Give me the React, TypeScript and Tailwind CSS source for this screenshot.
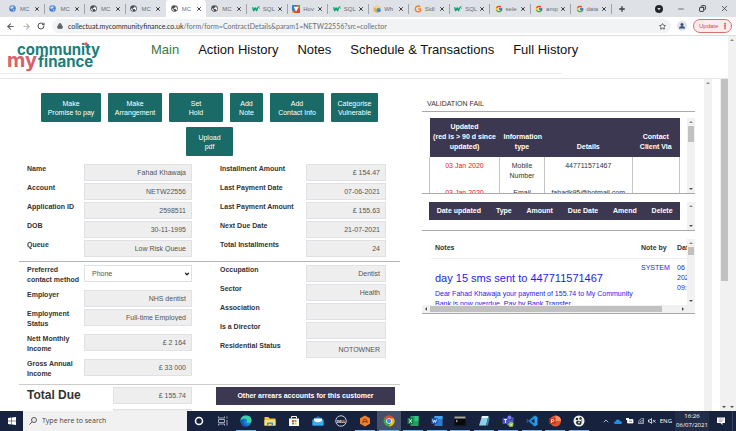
import React from "react";
import { FcGoogle } from "react-icons/fc";
import {
  ArrowLeft,
  ArrowRight,
  ChevronDown,
  ChevronUp,
  Copy,
  Lock,
  Minus,
  MoreVertical,
  Plus,
  RotateCw,
  Star,
  X,
} from "lucide-react";

/* ---------- browser tabs ---------- */

const BlueGlobe = () => (
  <svg viewBox="0 0 12 12" className="size-[7px]">
    <circle cx="6" cy="6" r="5.6" fill="#4a7fd0" />
    <path d="M2 4Q5 1 9 3L6 6 3 7ZM6 8l4-1-2 3Z" fill="#cfe0f7" />
  </svg>
);

const Globe = () => (
  <svg viewBox="0 0 12 12" className="size-[7px]">
    <circle cx="6" cy="6" r="5.7" fill="#4b4f54" />
    <path d="M1.5 5.5 4 7l1 3.5Q1.6 9.500 1.500 5.500ZM6 1.500l2 1-1 2-2.500.5L5 6.500l3 .5 1 2.500q2-2 1.500-4.500L9 4l.500-1.200Z" fill="#fff" />
  </svg>
);

const W3 = () => (
  <svg viewBox="0 0 14 10" className="h-[6px] w-[8px]">
    <path d="M1 2l2 6 2.500-5L8 8l2-6" fill="none" stroke="#0aa06e" strokeWidth="2.400" strokeLinejoin="round" />
    <path d="M10.500 1h2.500l-1.500 1.500q1.500 0 1.500 2" fill="none" stroke="#0aa06e" strokeWidth="1.200" />
  </svg>
);

const Mosaic = () => (
  <svg viewBox="0 0 14 14" className="size-[8px]">
    <path d="M0 0h14v14H0Z" fill="#d9482b" />
    <path d="M0 0h6l1 7-7 7Z" fill="#2f7de0" />
    <path d="M8 0h6v8Z" fill="#58a83c" />
    <path d="M3 3h9L7 12Z" fill="#fff" />
    <path d="M0 9l5 5H0Z" fill="#f0b429" />
  </svg>
);

const Box = () => (
  <svg viewBox="0 0 14 14" className="size-[8px]">
    <path d="M1 4l6-3 6 3v7l-6 3-6-3Z" fill="#e9b44c" />
    <path d="M1 4l6 2.500L13 4 7 1Z" fill="#f7d588" />
    <circle cx="10" cy="9" r="3.600" fill="#3f8fd8" />
  </svg>
);

const OrangeG = () => (
  <svg viewBox="0 0 14 14" className="size-[8px]">
    <path d="M11 3Q7 .5 3.500 3.500 1 7 3.500 10.500 8 13.500 11.500 10V7H7.500" fill="none" stroke="#f58220" strokeWidth="2.400" strokeLinejoin="round" />
  </svg>
);

const GoogleG = () => <FcGoogle className="size-[8px]" />;

const tabs: { icon: React.FC; text: string; active?: boolean }[] = [
  { icon: BlueGlobe, text: "MC" },
  { icon: BlueGlobe, text: "MC" },
  { icon: Globe, text: "MC" },
  { icon: Globe, text: "MC" },
  { icon: Globe, text: "MC", active: true },
  { icon: Globe, text: "MC" },
  { icon: W3, text: "SQL" },
  { icon: Mosaic, text: "Hov" },
  { icon: W3, text: "SQL" },
  { icon: Box, text: "Wh" },
  { icon: OrangeG, text: "Sidl" },
  { icon: W3, text: "SQL" },
  { icon: GoogleG, text: "sele" },
  { icon: GoogleG, text: "amp" },
  { icon: GoogleG, text: "data" },
];

function TabStrip() {
  return (
    <div className="flex h-[17px] shrink-0 items-center bg-[#dee1e6] pl-1">
      <div className="grid h-full w-[607px] shrink-0 grid-cols-15">
        {tabs.map((t, i) => (
          <div
            key={i}
            className={
              t.active
                ? "flex min-w-0 items-center rounded-t-[3px] bg-white pr-1 pl-[5px]"
                : "flex min-w-0 items-center pr-1 pl-[5px]"
            }
          >
            <span className="flex w-[11px] shrink-0">
              <t.icon />
            </span>
            <span className="w-[13px] shrink-0 text-[6px] whitespace-nowrap text-[#6b6f74]">{t.text}</span>
            <button aria-label="Close tab" className="ml-px shrink-0">
              <X className="size-[6px] text-[#3c4043]" strokeWidth={4} />
            </button>
            {!t.active && i !== 3 && <span className="ml-auto h-[10px] w-px shrink-0 translate-x-1 bg-[#a0a3a8]" />}
          </div>
        ))}
      </div>
      <button aria-label="New tab" className="ml-[7px]">
        <Plus className="size-[8px] text-[#3c4043]" strokeWidth={4} />
      </button>
      <div className="ml-auto flex items-center gap-[14px] pr-[7px]">
        <svg viewBox="0 0 12 12" className="size-[8px]">
          <circle cx="6" cy="6" r="6" fill="#24272b" />
          <path d="M3.500 4.500h5L6 8Z" fill="#dee1e6" />
        </svg>
        <Minus className="size-[8px] text-[#333]" />
        <Copy className="size-[7px] -scale-x-100 text-[#222]" strokeWidth={3} />
        <X className="size-[9px] text-[#333]" strokeWidth={2} />
      </div>
    </div>
  );
}

function Toolbar() {
  return (
    <div className="flex h-[19px] shrink-0 items-center border-b border-[#dcdde0] bg-white pr-1 pl-[6px]">
      <button aria-label="Back" className="w-4">
        <ArrowLeft className="size-[9px] text-[#5f6368]" strokeWidth={3} />
      </button>
      <button aria-label="Forward" className="w-[15px]">
        <ArrowRight className="size-[9px] text-[#b5b8bc]" strokeWidth={3} />
      </button>
      <button aria-label="Reload" className="w-[15px]">
        <RotateCw className="size-[8px] text-[#4d5156]" strokeWidth={3} />
      </button>
      <div className="flex h-[14px] min-w-0 flex-1 items-center rounded-full bg-[#f1f3f4] px-[5px]">
        <Lock className="mr-[5px] size-[6px] shrink-0 fill-[#5f6368] text-[#5f6368]" strokeWidth={3} />
        <p className="min-w-0 flex-1 overflow-hidden font-['Lato','Noto_Sans',sans-serif] text-[7px] whitespace-nowrap text-[#6b6f74]">
          <span className="text-[#2b2d30]">collectuat.mycommunityfinance.co.uk</span>
          /form/form=ContractDetails&amp;param1=NETW22556?src=collector
        </p>
        <Star className="size-[7px] shrink-0 text-[#4d5156]" strokeWidth={3} />
      </div>
      <svg viewBox="0 0 20 20" className="mx-[6px] size-[10px]">
        <circle cx="10" cy="10" r="10" fill="#dfe3ec" />
        <circle cx="10" cy="7" r="3" fill="#3f5170" />
        <path d="M4 15v-2q2-3 6-3t6 3v2Z" fill="#3f5170" />
      </svg>
      <button className="flex h-[14px] w-[39px] items-center justify-between rounded-full border border-[#d9706a] bg-[#fdeceb] pr-[2px] pl-[5px] text-[6px] text-[#c9514b]">
        Update
        <MoreVertical className="size-[8px]" strokeWidth={4} />
      </button>
    </div>
  );
}

/* ---------- scroll bars ---------- */

const Up = () => (
  <svg viewBox="0 0 8 8" className="size-[8px] shrink-0">
    <path d="M2 5h4L4 3Z" fill="#8b8b8b" />
  </svg>
);
const Down = () => (
  <svg viewBox="0 0 8 8" className="size-[8px] shrink-0">
    <path d="M2 3h4L4 5Z" fill="#505050" />
  </svg>
);

function VBar({ thumb, noUp, noDown }: { thumb?: string; noUp?: boolean; noDown?: boolean }) {
  return (
    <div className="flex w-2 shrink-0 flex-col items-center bg-[#f1f1f1]">
      {!noUp && <Up />}
      {thumb && <div className={`shrink-0 bg-[#c1c1c1] ${thumb}`} />}
      <div className="flex-1" />
      {!noDown && <Down />}
    </div>
  );
}

/* ---------- page header ---------- */

function Logo() {
  return (
    <svg viewBox="0 0 98 34" className="h-[34px] w-[98px] shrink-0" role="img" aria-label="community my finance">
      <g fontFamily="Inter, Lato, sans-serif" fontWeight="700">
        <text x="10" y="15" fontSize="15" fill="#1a7f7c">community</text>
        <text x="0" y="27" fontSize="20" fill="#d9606b">my</text>
        <text x="31" y="27" fontSize="15" fill="#1a7f7c">finance</text>
      </g>
      <circle cx="79" cy="4" r="1.800" fill="#e0555f" />
    </svg>
  );
}

function Header() {
  return (
    <header className="mb-1 flex h-[38px] shrink-0 items-start">
      <div className="flex h-full w-[562px] items-start border-b border-[#ececec] pt-1 pl-[7px]">
        <Logo />
        <nav className="ml-[46px] flex gap-[19px] pt-[1px] text-[13px] leading-[18px] whitespace-nowrap text-[#111]">
          <a href="#main" className="text-[#3c763d]">Main</a>
          <a href="#actions">Action History</a>
          <a href="#notes">Notes</a>
          <a href="#schedule">Schedule &amp; Transactions</a>
          <a href="#history">Full History</a>
        </nav>
      </div>
    </header>
  );
}

/* ---------- contract details ---------- */

const actions = [
  ["Make", "Promise to pay", "w-[60px]"],
  ["Make", "Arrangement", "w-[54px]"],
  ["Set", "Hold", "w-[54px]"],
  ["Add", "Note", "w-[33px]"],
  ["Add", "Contact Info", "w-[54px]"],
  ["Categorise", "Vulnerable", "w-[47px]"],
  ["Upload", "pdf", "w-[47px]"],
];

const box = "mb-[2px] h-[17px] border border-[#dfe1e5] bg-[#eee] px-[5px] text-right text-[7px] text-[#555]";

function Field({ label, value, wide }: { label: string; value: string; wide?: boolean }) {
  const id = label.toLowerCase().replace(/ /g, "-");
  return (
    <div className="flex items-start">
      <label htmlFor={id} className={wide ? "w-[57px] pb-[5px] font-bold" : "w-[86px] font-bold whitespace-nowrap"}>
        {label}
      </label>
      <input id={id} readOnly value={value} className={wide ? `${box} w-[108px]` : `${box} w-[80px]`} />
    </div>
  );
}

function Details() {
  return (
    <section className="w-[381px] shrink-0 pt-[14px]">
      <div className="flex flex-wrap justify-center gap-x-[7px] gap-y-[5px] px-5">
        {actions.map(([a, b, w]) => (
          <button key={b} className={`h-[29px] rounded-[1px] bg-[#1a6b67] leading-[9px] text-white ${w}`}>
            {a}
            <br />
            {b}
          </button>
        ))}
      </div>

      <div className="mt-2 flex gap-7 border-b border-[#b5b5b5] pb-[2px] pl-2">
        <div>
          <Field wide label="Name" value="Fahad Khawaja" />
          <Field wide label="Account" value="NETW22556" />
          <Field wide label="Application ID" value="2598511" />
          <Field wide label="DOB" value="30-11-1995" />
          <Field wide label="Queue" value="Low Risk Queue" />
        </div>
        <div>
          <Field label="Installment Amount" value="£ 154.47" />
          <Field label="Last Payment Date" value="07-06-2021" />
          <Field label="Last Payment Amount" value="£ 155.63" />
          <Field label="Next Due Date" value="21-07-2021" />
          <Field label="Total Installments" value="24" />
        </div>
      </div>

      <div className="flex gap-7 border-b border-[#ccc] pt-[3px] pl-2">
        <div>
          <div className="flex items-start">
            <label htmlFor="contact" className="w-[57px] pb-[5px] font-bold">
              Preferred contact method
            </label>
            <div className="relative">
              <select
                id="contact"
                className="h-[17px] w-[108px] appearance-none border border-[#dfe1e5] bg-white px-[7px] text-[7px] text-[#555]"
              >
                <option>Phone</option>
              </select>
              <ChevronDown className="pointer-events-none absolute top-[6px] right-[2px] size-[6px] text-[#222]" strokeWidth={5} />
            </div>
          </div>
          <Field wide label="Employer" value="NHS dentist" />
          <Field wide label="Employment Status" value="Full-time Employed" />
          <Field wide label="Nett Monthly Income" value="£ 2 164" />
          <Field wide label="Gross Annual Income" value="£ 33 000" />
        </div>
        <div>
          <Field label="Occupation" value="Dentist" />
          <Field label="Sector" value="Health" />
          <Field label="Association" value="" />
          <Field label="Is a Director" value="" />
          <Field label="Residential Status" value="NOTOWNER" />
        </div>
      </div>

      <div className="flex items-start gap-6 pt-[2px] pr-[5px] pl-2">
        <div>
          <div className="flex items-start">
            <label htmlFor="total" className="w-[86px] text-[12px] leading-[17px] font-bold whitespace-nowrap">
              Total Due
            </label>
            <input id="total" readOnly value="£ 155.74" className={`${box} w-[79px]`} />
          </div>
          <input aria-label="Outstanding" readOnly value="" className={`${box} mt-[3px] ml-[86px] w-[79px]`} />
        </div>
        <button className="h-[18px] flex-1 bg-[#3d3851] font-bold text-white">Other arrears accounts for this customer</button>
      </div>
    </section>
  );
}

/* ---------- right-hand lists ---------- */

const cell = "border-x border-[#c4c4c4] px-1 pt-1 pb-[3px]";

function Lists() {
  return (
    <section className="min-w-0 flex-1 pt-[20px]">
      <h2 className="border-b border-[#aaa] pb-[2px] pl-[5px]">VALIDATION FAIL</h2>

      <div className="flex h-[82px] overflow-hidden border-b border-[#aaa] pt-[6px]">
        <div className="min-w-0 flex-1 pr-[7px] pl-[7px]">
          <table className="w-full table-fixed border-collapse text-center align-top">
            <colgroup>
              <col className="w-[28%]" />
              <col className="w-[18%]" />
              <col className="w-[35%]" />
              <col className="w-[19%]" />
            </colgroup>
            <thead>
              <tr className="bg-[#3d3851] align-bottom text-white">
                <th className="pt-1 pb-[5px]">
                  Updated
                  <br />
                  (red is &gt; 90 d since
                  <br />
                  updated)
                </th>
                <th className="px-1 pt-1 pb-[5px]">Information type</th>
                <th className="px-1 pt-1 pb-[5px]">Details</th>
                <th className="px-1 pt-1 pb-[5px]">
                  Contact
                  <br />
                  Client Via
                </th>
              </tr>
            </thead>
            <tbody className="align-top">
              <tr>
                <td className={`${cell} text-[#f0141e]`}>03 Jan 2020</td>
                <td className={cell}>Mobile Number</td>
                <td className={cell}>447711571467</td>
                <td className={cell} />
              </tr>
              <tr>
                <td className={`${cell} text-[#f0141e]`}>03 Jan 2020</td>
                <td className={cell}>Email</td>
                <td className={cell}>fahadk95@hotmail.com</td>
                <td className={cell} />
              </tr>
            </tbody>
          </table>
        </div>
        <VBar thumb="h-[16px] w-[6px]" />
      </div>

      <div className="flex h-[37px] overflow-hidden border-b border-[#aaa] pt-2">
        <div className="min-w-0 flex-1 px-[7px]">
          <table className="w-full bg-[#3d3851] text-center text-white">
            <thead>
              <tr className="h-[18px]">
                {["Date updated", "Type", "Amount", "Due Date", "Amend", "Delete"].map((h) => (
                  <th key={h} className="px-[7px] whitespace-nowrap">{h}</th>
                ))}
              </tr>
            </thead>
          </table>
        </div>
        <VBar />
      </div>

      <div className="mt-2 border-b border-[#aaa]">
        <div className="flex h-[66px] overflow-hidden">
          <div className="min-w-0 flex-1 overflow-hidden pl-[9px]">
            <table className="w-[290px] table-fixed border-collapse text-left align-top">
              <colgroup>
                <col className="w-[206px]" />
                <col className="w-[36px]" />
                <col />
              </colgroup>
              <thead>
                <tr className="border-b border-[#eee]">
                  <th className="px-1 pt-1 pb-[5px]">Notes</th>
                  <th className="px-1 pt-1 pb-[5px] whitespace-nowrap">Note by</th>
                  <th className="px-1 pt-1 pb-[5px]">Date</th>
                </tr>
              </thead>
              <tbody className="align-top text-[#1c1cf2]">
                <tr>
                  <td className="pt-3 pl-1">
                    <h3 className="mb-1 text-[11px] leading-[14px] whitespace-nowrap">day 15 sms sent to 447711571467</h3>
                    <p>
                      Dear Fahad Khawaja your payment of 155.74 to My Community
                      <br />
                      Bank is now overdue. Pay by Bank Transfer
                    </p>
                  </td>
                  <td className="px-1 pt-1">SYSTEM</td>
                  <td className="px-1 pt-1">
                    06 Jul
                    <br />
                    2021
                    <br />
                    09:00
                  </td>
                </tr>
              </tbody>
            </table>
          </div>
          <VBar thumb="h-[8px] w-[6px]" />
        </div>
        <div className="flex h-2 items-center bg-[#f1f1f1] pr-2">
          <span className="flex rotate-90"><Down /></span>
          <div className="h-[6px] w-[232px] bg-[#c1c1c1]" />
          <div className="flex-1" />
          <span className="flex -rotate-90"><Down /></span>
        </div>
      </div>
    </section>
  );
}

/* ---------- task bar ---------- */

const Cortana = () => <circle cx="12" cy="12" r="7" fill="none" stroke="#fff" strokeWidth="3" />;
const TaskView = () => (
  <g fill="none" stroke="#c3c9d4" strokeWidth="1.600">
    <path d="M3 3v3h12V3M3 21v-3h12v3M3 9h12v6H3ZM20 3v4M20 10v11" />
  </g>
);
const Edge = () => (
  <>
    <circle cx="12" cy="12" r="11" fill="#1583d8" />
    <path d="M1 12Q1 1 12 1q11 0 11 10 0 5-6 5-4 0-4-2 2-2 1-4-1-3-5-3-6 0-8 5Z" fill="#3fd0a8" />
    <path d="M9 9q-4 5 1 10 5 3 9 1-3 3-8 3Q2 22 1 12q3-5 8-3Z" fill="#0d5fb8" />
  </>
);
const Explorer = () => (
  <>
    <path d="M1 4h8l2 3h12v14H1Z" fill="#f5c344" />
    <path d="M1 10h22v11H1Z" fill="#fbdd7b" />
    <path d="M6 15h12v6h-3v-3H9v3H6Z" fill="#3c94dc" />
  </>
);
const Store = () => (
  <>
    <path d="M7 7V3h10v4" fill="none" stroke="#fff" strokeWidth="2" />
    <path d="M2 7h20v15H2Z" fill="#fff" />
    <path d="M8 10h4v4H8Z" fill="#e8502c" />
    <path d="M13 10h4v4h-4Z" fill="#78b52e" />
    <path d="M8 15h4v4H8Z" fill="#26a0e8" />
    <path d="M13 15h4v4h-4Z" fill="#f8b918" />
  </>
);
const Mail = () => (
  <>
    <path d="M1 9 12 2l11 7v12H1Z" fill="#1272c4" />
    <path d="M4 7h16v8H4Z" fill="#fff" />
    <path d="M1 9l11 8 11-8v12H1Z" fill="#35b0f0" />
  </>
);
const Dell = () => (
  <>
    <circle cx="12" cy="12" r="10.500" fill="none" stroke="#d9dde4" strokeWidth="1.800" />
    <text x="12" y="15" textAnchor="middle" fontSize="7" fontWeight="700" fill="#fff">DELL</text>
  </>
);
const Hex = () => (
  <>
    <path d="M12 1l10 5.500v11L12 23 2 17.500v-11Z" fill="#f07c2c" />
    <path d="M8 16v-5l4-3 4 3v5M8 13h8" fill="none" stroke="#8d3908" strokeWidth="2" />
  </>
);
const Chrome = () => (
  <>
    <circle cx="12" cy="12" r="11" fill="#34a853" />
    <path d="M12 12 2.500 6.500A11 11 0 0 1 21.500 6.500Z" fill="#ea4335" />
    <path d="M12 7h9.800A11 11 0 0 1 12 23l4.500-9Z" fill="#fbbc05" />
    <circle cx="12" cy="12" r="5.500" fill="#fff" />
    <circle cx="12" cy="12" r="4.300" fill="#4285f4" />
  </>
);
const Excel = () => (
  <>
    <path d="M7 2h16v20H7Z" fill="#21a366" />
    <path d="M15 2h8v10h-8Z" fill="#33c481" />
    <path d="M1 6h12v12H1Z" fill="#107c41" />
    <path d="M4.500 8.500l5 7M9.500 8.500l-5 7" stroke="#fff" strokeWidth="1.800" />
  </>
);
const Word = () => (
  <>
    <path d="M7 2h16v20H7Z" fill="#2b7cd3" />
    <path d="M7 2h16v6H7Z" fill="#41a5ee" />
    <path d="M1 6h12v12H1Z" fill="#185abd" />
    <path d="M3 9l2 6 2-5 2 5 2-6" fill="none" stroke="#fff" strokeWidth="1.600" />
  </>
);
const Terminal = () => (
  <>
    <path d="M1 3h22v18H1Z" fill="#0b0b0b" />
    <path d="M1 3h22v4H1Z" fill="#a8a8a8" />
    <path d="M4 10l3 2-3 2" fill="none" stroke="#ddd" strokeWidth="1.500" />
  </>
);
const Notepad = () => (
  <>
    <path d="M8 2h13l-5 19H2Z" fill="#8fd0e8" />
    <path d="M8 2h13l-1 4H7Z" fill="#e8f4f8" />
    <path d="M16 21l5-19 2 4-3 15Z" fill="#3f87a5" />
  </>
);
const Teams = () => (
  <>
    <circle cx="15" cy="5" r="4" fill="#7b83eb" />
    <circle cx="21" cy="7" r="2.500" fill="#5059c9" />
    <path d="M9 9h14v8q-3 6-9 5-5-1-5-7Z" fill="#5059c9" />
    <path d="M1 6h12v12H1Z" fill="#4b53bc" />
    <path d="M4 9h6M7 9v7" stroke="#fff" strokeWidth="1.800" />
    <circle cx="18" cy="19" r="5" fill="#92c353" />
    <path d="M15.500 19l2 2 3-4" fill="none" stroke="#fff" strokeWidth="1.500" />
  </>
);
const Code = () => (
  <>
    <path d="M17 1l6 3v16l-6 3L5 12Z" fill="#2a9df0" />
    <path d="M17 7v10l-7-5Z" fill="#17223f" />
    <path d="M2 8l15 12v3L1 10ZM2 16 17 4V1L1 14Z" fill="#0b78c8" />
  </>
);
const PowerPoint = () => (
  <>
    <circle cx="13" cy="12" r="11" fill="#e0532f" />
    <path d="M13 1a11 11 0 0 1 11 11H13Z" fill="#ff8f6b" />
    <path d="M1 6h12v12H1Z" fill="#c43e1c" />
    <path d="M5 16V9h2.500q2 0 2 2t-2 2H5" fill="none" stroke="#fff" strokeWidth="1.600" />
  </>
);
const Paint = () => (
  <>
    <circle cx="12" cy="12" r="11" fill="#eef3f0" />
    <circle cx="8" cy="8" r="2.500" fill="#222c2a" />
    <circle cx="15" cy="7" r="2.500" fill="#222c2a" />
    <path d="M6 14q3-4 7-2l4 1q1 5-3 7l-5-1q-3-1-3-5Z" fill="#222c2a" />
    <circle cx="12" cy="15" r="1.800" fill="#eef3f0" />
    <path d="M17 9l2 2-1 3-2-2Z" fill="#d9542f" />
  </>
);

const apps: { name: string; art: React.FC; open?: boolean; current?: boolean }[] = [
  { name: "Cortana", art: Cortana },
  { name: "Task View", art: TaskView },
  { name: "Edge", art: Edge, open: true },
  { name: "File Explorer", art: Explorer },
  { name: "Store", art: Store },
  { name: "Mail", art: Mail },
  { name: "Dell", art: Dell },
  { name: "Hexagon", art: Hex, open: true },
  { name: "Chrome", art: Chrome, open: true, current: true },
  { name: "Excel", art: Excel, open: true },
  { name: "Word", art: Word, open: true },
  { name: "Terminal", art: Terminal, open: true },
  { name: "Notepad", art: Notepad, open: true },
  { name: "Teams", art: Teams, open: true },
  { name: "Code", art: Code, open: true },
  { name: "PowerPoint", art: PowerPoint, open: true },
  { name: "Paint", art: Paint, open: true },
];

function TaskBar() {
  return (
    <footer className="flex h-5 shrink-0 items-stretch bg-[#17223f] font-['Open_Sans','Noto_Sans',sans-serif] text-white">
      <button aria-label="Start" className="flex w-[23px] items-center justify-center">
        <svg viewBox="0 0 16 16" className="size-[8px]" fill="#fff">
          <path d="M0 2l7-1v6.500H0ZM8 1l8-1v7.500H8ZM0 8.500h7V15l-7-1ZM8 8.500h8V16l-8-1Z" />
        </svg>
      </button>
      <label className="flex w-[164px] items-center gap-[5px] bg-[#f1f1f1] pl-[6px]">
        <svg viewBox="0 0 16 16" className="size-[8px] shrink-0" fill="none" stroke="#333" strokeWidth="1.600">
          <circle cx="10" cy="6" r="5" />
          <path d="M6.500 9.500 1 15" />
        </svg>
        <input aria-label="Search" placeholder="Type here to search" className="min-w-0 flex-1 text-[7px] placeholder:text-[#444]" />
      </label>
      <div className="grid w-[404px] grid-cols-17">
        {apps.map(({ name, art: Art, open, current }) => (
          <button
            key={name}
            aria-label={name}
            className={current ? "flex flex-col items-center bg-[#45506a]" : "flex flex-col items-center"}
          >
            <svg viewBox="0 0 24 24" className="mt-1 size-[12px]">
              <Art />
            </svg>
            {open && <span className="mt-auto h-px w-5 bg-[#76b9ed]" />}
          </button>
        ))}
      </div>
      <div className="ml-auto flex items-center gap-1 pr-[3px]">
        <ChevronUp className="size-[8px]" strokeWidth={2} />
        <svg viewBox="0 0 16 10" className="h-[5px] w-[8px]" fill="#1e90e8">
          <path d="M3 10Q0 10 0 7.500 0 5 3 5 4 0 8 1q3 0 4 3 4 0 4 3t-3 3Z" />
        </svg>
        <svg viewBox="0 0 16 12" className="h-[6px] w-[8px]">
          <path d="M0 0h6v4H0Z" fill="#fff" />
          <path d="M3 3h11v7H3Z" fill="#fff" stroke="#fff" strokeWidth="1.500" />
          <path d="M6 5h6v3H6Z" fill="#aab" />
        </svg>
        <svg viewBox="0 0 14 14" className="size-[6px]" fill="none" stroke="#cfd4dd" strokeWidth="1.500">
          <path d="M1 13Q1 1 13 1M4 13q0-8 9-8M8 13q0-4 5-4M1 13h12V1" />
        </svg>
        <svg viewBox="0 0 16 12" className="h-[6px] w-[8px]" fill="none" stroke="#fff" strokeWidth="1.500">
          <path d="M1 4h3l3-3v10L4 8H1ZM10 4l5 5M15 4l-5 5" />
        </svg>
        <span className="text-[6px]">ENG</span>
      </div>
      <div className="flex w-[34px] flex-col justify-center bg-[#232d48] text-center text-[6px] leading-[9px] whitespace-nowrap">
        <span>16:26</span>
        <span>06/07/2021</span>
      </div>
      <button aria-label="Notifications" className="flex w-[23px] items-center justify-center">
        <svg viewBox="0 0 16 16" className="size-[8px]">
          <path d="M0 1h16v11H11v4l-4-4H0Z" fill="#fff" />
          <path d="M3 4h10M3 6.500h10M3 9h7" stroke="#68718a" />
        </svg>
      </button>
      <div className="w-1 border-l border-[#3b4560]" />
    </footer>
  );
}

export default function App() {
  return (
    <div className="flex h-screen flex-col overflow-hidden bg-white font-['Liberation_Sans',Arial,sans-serif] text-[7px] leading-[10px] text-[#333]">
      <TabStrip />
      <Toolbar />
      <main className="flex min-h-0 flex-1">
        <div className="flex min-w-0 flex-1 flex-col">
          <Header />
          <div className="flex min-h-0 flex-1 overflow-hidden border-t border-[#e6e6e6]">
            <div className="flex min-w-0 flex-1 gap-[22px] pr-[9px] pl-[19px]">
              <Details />
              <Lists />
            </div>
            <VBar noDown />
            <div className="w-2 shrink-0" />
            <VBar noUp thumb="h-[202px] w-[7px]" />
          </div>
        </div>
        <VBar />
      </main>
      <TaskBar />
    </div>
  );
}
